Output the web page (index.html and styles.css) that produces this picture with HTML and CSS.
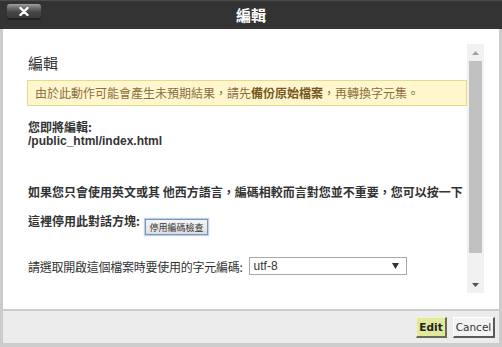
FILE: index.html
```html
<!DOCTYPE html>
<html lang="zh-Hant">
<head>
    <meta charset="UTF-8">
    <meta name="viewport" content="width=device-width, initial-scale=1.0">
    <title>編輯</title>
    <link rel="stylesheet" href="styles.css">
</head>
<body>

<div class="dialog">
    <div class="titlebar">
        <button class="close-button">
            <svg width="10" height="9" viewBox="0 0 10 9">
                <path d="M1.5 1 L8.5 8 M8.5 1 L1.5 8" stroke="#fff" stroke-width="2.4" stroke-linecap="round"/>
            </svg>
        </button>
        <h1>編輯</h1>
    </div>

    <div class="main">
        <div class="content">
            <h2>編輯</h2>

            <!-- 警告訊息 -->
            <div class="warning">由於此動作可能會產生未預期結果，請先<strong>備份原始檔案</strong>，再轉換字元集。</div>

            <p class="file-info">您即將編輯:<br><span class="path">/public_html/index.html</span></p>

            <p class="notice">如果您只會使用英文或其 他西方語言，編碼相較而言對您並不重要，您可以按一下</p>
            <div class="notice-row">
                <span class="notice">這裡停用此對話方塊:</span>
                <button class="disable-button">停用編碼檢查</button>
            </div>

            <div class="charset-row">
                <span class="charset-label">請選取開啟這個檔案時要使用的字元編碼:</span>
                <div class="select">
                    <span>utf-8</span>
                    <svg width="7" height="6" viewBox="0 0 7 6"><path d="M0 0 H7 L3.5 6 Z" fill="#333"/></svg>
                </div>
            </div>
        </div>

        <!-- 捲軸 -->
        <div class="scrollbar">
            <div class="arrow">
                <svg width="7" height="4" viewBox="0 0 7 4"><path d="M0 4 H7 L3.5 0 Z" fill="#a3a3a3"/></svg>
            </div>
            <div class="thumb"></div>
            <div class="track"></div>
            <div class="arrow">
                <svg width="7" height="4" viewBox="0 0 7 4"><path d="M0 0 H7 L3.5 4 Z" fill="#505050"/></svg>
            </div>
        </div>
    </div>

    <div class="footer">
        <button class="edit-button">Edit</button>
        <button class="cancel-button">Cancel</button>
    </div>
</div>

</body>
</html>
```

FILE: styles.css
```css
* {
    box-sizing: border-box;
}

body {
    margin: 0;
    font-family: "Noto Sans CJK TC", "Noto Sans CJK SC", sans-serif;
    color: #333;
    background-color: #ccc;
}
.dialog {
    width: 502px;
    height: 347px;
    display: flex;
    flex-direction: column;
}

/* title bar */
.titlebar {
    height: 29px;
    background-color: #333;
    border-top: 1px solid #4a4a4a;
    display: grid;
    grid-template-columns: 1fr auto 1fr;
    align-items: start;
}
.titlebar h1 {
    margin: 0;
    color: white;
    font-size: 15px;
    font-weight: bold;
    line-height: 27px;
}
.close-button {
    width: 34px;
    height: 14px;
    margin: 3px 0 0 7px;
    padding: 0;
    border: none;
    border-radius: 3px;
    background: linear-gradient(#a2a2a2, #6a6a6a 30%, #454545 60%, #3a3a3a);
    box-shadow: 0 2px 0 #1d2427;
    display: flex;
    justify-content: center;
    align-items: center;
}

/* body */
.main {
    flex: 1;
    display: flex;
    background-color: white;
    border-left: 3px solid #ccc;
    border-right: 3px solid #ccc;
    padding: 15px 15px 16px 25px;
}
.content {
    flex: 1;
    font-size: 12px;
}
h2 {
    margin: 9px 0 7px;
    font-size: 15px;
    font-weight: normal;
    line-height: 20px;
}
.warning {
    margin-left: -1px;
    height: 26px;
    padding: 0 7px;
    line-height: 24px;
    background-color: #fef6cd;
    border: 1px solid #e6d98b;
    color: #8d6e40;
}
.warning strong {
    color: #785622;
}
.file-info {
    margin: 14px 0 0;
    line-height: 13px;
    font-weight: bold;
}
.path {
    font-family: "Liberation Sans", Arial, sans-serif;
}
.notice {
    font-weight: bold;
    line-height: 14px;
}
p.notice {
    margin: 37px 0 0;
}
.notice-row {
    display: flex;
    align-items: flex-start;
    margin-top: 15px;
}
.disable-button {
    margin: 5px 0 0 5px;
    width: 63px;
    height: 16px;
    padding: 0;
    font-family: inherit;
    font-size: 9px;
    line-height: 13px;
    color: #333;
    background: linear-gradient(#f6f6f6, #dedede);
    border: 1px solid #8193b0;
    box-shadow: 0 0 1px 1px #b9d1f3;
}
.charset-row {
    display: flex;
    align-items: center;
    margin-top: 22px;
    height: 18px;
}
.charset-label {
    letter-spacing: -0.25px;
}
.select {
    margin-left: 6px;
    width: 158px;
    height: 18px;
    border: 1px solid #a9a9a9;
    display: flex;
    justify-content: space-between;
    align-items: center;
    padding: 0 7px 0 4px;
    font-family: "Liberation Sans", Arial, sans-serif;
    font-size: 12px;
}

/* scrollbar */
.scrollbar {
    width: 17px;
    background-color: #f1f1f1;
    display: flex;
    flex-direction: column;
}
.arrow {
    height: 17px;
    display: flex;
    justify-content: center;
    align-items: center;
}
.thumb {
    height: 192px;
    margin: 0 2px;
    background-color: #c1c1c1;
}
.track {
    flex: 1;
}

/* footer */
.footer {
    height: 38px;
    background-color: #ececec;
    border: 3px solid #ccc;
    border-top: 2px solid #ccc;
    border-bottom-width: 4px;
    display: flex;
    justify-content: flex-end;
    align-items: flex-start;
    gap: 6px;
    padding: 6px 4px 0 0;
}
button {
    cursor: pointer;
}
.edit-button,
.cancel-button {
    height: 21px;
    padding: 0;
    font-family: "DejaVu Sans", Verdana, sans-serif;
    font-size: 10.5px;
    color: #222;
    border-style: solid;
    border-width: 1px 2px 2px 1px;
}
.edit-button {
    width: 31px;
    font-weight: bold;
    background-color: #e2e99a;
    border-color: #f2f5c8 #6a6a5a #6a6a5a #f2f5c8;
}
.cancel-button {
    width: 42px;
    color: #333;
    background-color: #f3f3f3;
    border-color: #fff #5a5a5a #5a5a5a #fff;
}
```
